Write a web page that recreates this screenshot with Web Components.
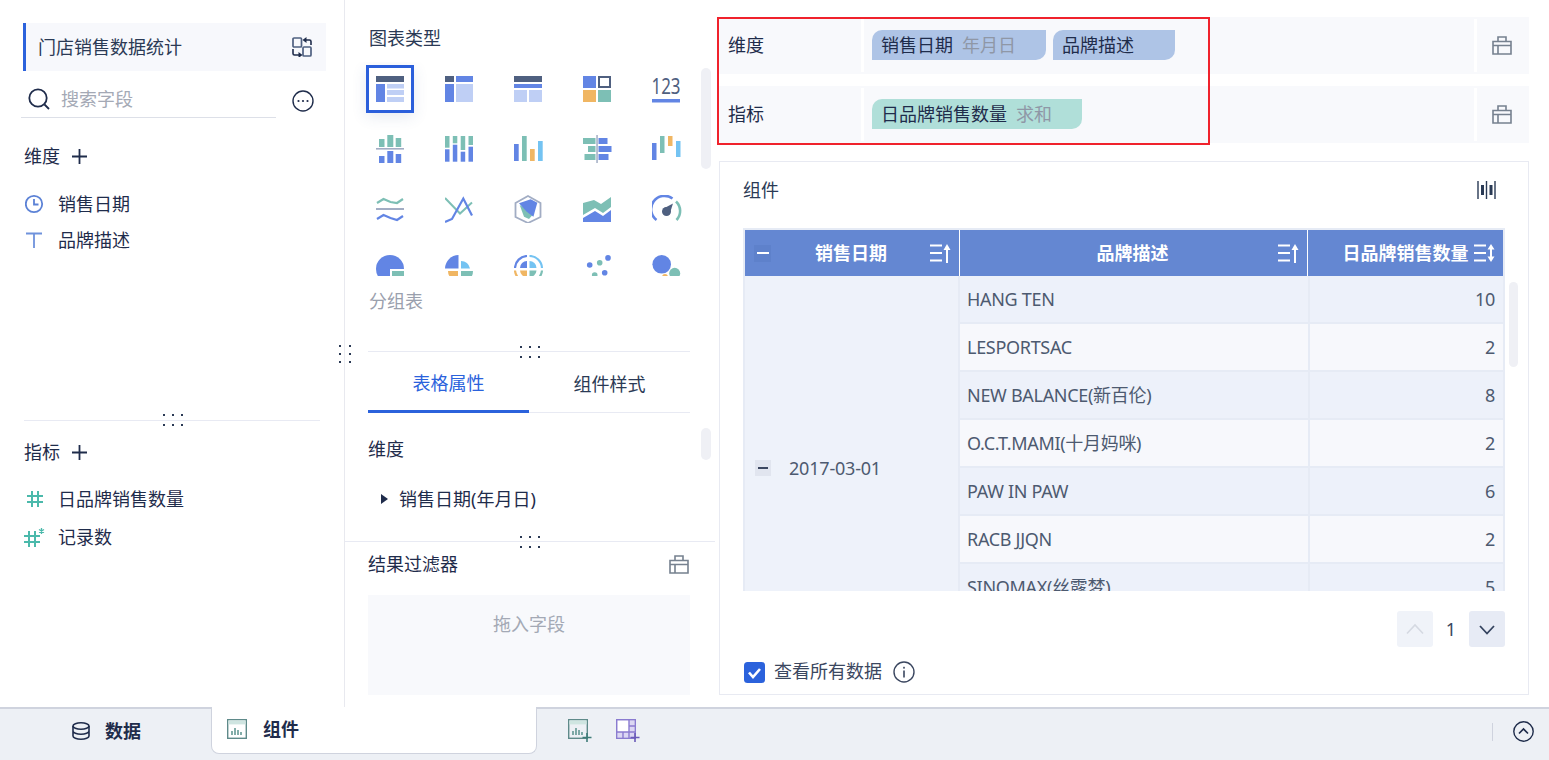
<!DOCTYPE html>
<html lang="zh">
<head>
<meta charset="utf-8">
<title>门店销售数据统计</title>
<style>
html, body { margin: 0; height: 760px; overflow: hidden; background: #fff; }
body {
	display: flex;
	flex-direction: column;
	font: 18px/26px "Noto Sans", "Noto Sans CJK SC", sans-serif;
	color: #1f2c4b;
}
.main { display: flex; height: 707px; }
</style>
</head>
<body>
<div class="main">
	<field-panel></field-panel>
	<chart-panel></chart-panel>
	<widget-panel></widget-panel>
</div>
<bottom-bar></bottom-bar>

<script>
const DARK = '#4f6080', BLUE = '#6285e4', TEAL = '#7dbfb5', ORANGE = '#f0b663', SKY = '#74c3f2', LIGHT = '#bfcff5', NAVY = '#1f2c4b';

function svg (w, h, body, box) {
	return `<svg xmlns="http://www.w3.org/2000/svg" width="${w}" height="${h}" viewBox="${box || `0 0 ${w} ${h}`}" fill="none" style="display:block">${body}</svg>`;
}

function rects (color, list) {
	return list.map(r => `<rect x="${r[0]}" y="${r[1]}" width="${r[2]}" height="${r[3]}" fill="${color}"/>`).join('');
}

const dropIcon = svg(20, 19, `<path d="M1 5.500h18V18H1zM6 5.500V1h8v4.500M1 9.500h18M6 9.500V18" stroke="#76818f" stroke-width="1.600"/>`);

const icons = {
	swap: svg(20, 20, `<rect x="1" y="1" width="8.500" height="9" rx="1" stroke="${DARK}" stroke-width="1.700"/><rect x="11" y="10" width="8" height="9" rx="1" stroke="${DARK}" stroke-width="1.700"/><path d="M13 3h4.500a1.500 1.500 0 0 1 1.500 1.500V8M1 12v4.500A1.500 1.500 0 0 0 2.500 18H8" stroke="${NAVY}" stroke-width="1.600"/><path d="M14.500 0l-4 3 4 3zM6.500 15l4 3-4 3z" fill="${NAVY}"/>`),
	search: svg(22, 22, `<circle cx="10" cy="10" r="8.700" stroke="${NAVY}" stroke-width="1.800"/><path d="M16.500 16.500l4.500 4.500" stroke="${NAVY}" stroke-width="1.800"/>`),
	more: svg(22, 22, `<circle cx="11" cy="11" r="10" stroke="${NAVY}" stroke-width="1.400"/><circle cx="6.500" cy="11" r="1.100" fill="${NAVY}"/><circle cx="11" cy="11" r="1.100" fill="${NAVY}"/><circle cx="15.500" cy="11" r="1.100" fill="${NAVY}"/>`),
	plus: svg(15, 15, `<path d="M7.500 0v15M0 7.500h15" stroke="${NAVY}" stroke-width="1.800"/>`),
	clock: svg(20, 20, `<circle cx="9" cy="10" r="8.200" stroke="#5c82d6" stroke-width="1.800"/><path d="M9 5v5.500h4.500" stroke="#5c82d6" stroke-width="1.800"/>`),
	text: svg(20, 20, `<path d="M1 3.500h16M9 3.500V18" stroke="#6f92dc" stroke-width="1.800"/>`),
	hash: svg(20, 20, `<path d="M7 2v16M13 2v16M2 7h16M2 13h16" stroke="#4bb9ab" stroke-width="2"/>`),
	hashStar: svg(24, 20, `<path d="M6 4v16M12 4v16M1 9h16M1 15h16" stroke="#4bb9ab" stroke-width="2"/><path d="M18.500 1v6M16 2.500l5 3M21 2.500l-5 3" stroke="#4bb9ab" stroke-width="1.300"/>`),
	drop: dropIcon,
	bars: svg(20, 20, `<path d="M1 1v18M9.500 1v18M18 1v18" stroke="#2a3a55" stroke-width="1.400"/><rect x="4" y="5" width="3" height="10" fill="#2a3a55"/><rect x="12.500" y="5" width="3" height="10" fill="#2a3a55"/>`),
	sortUp: svg(21, 20, `<path d="M0 2.500h12M0 10h12M0 17.500h12M17 20V5" stroke="#fff" stroke-width="2"/><path d="M13.500 7L17 1l3.500 6z" fill="#fff"/>`),
	sortBoth: svg(21, 20, `<path d="M0 2.500h12M0 10h12M0 17.500h12M17 15V5" stroke="#fff" stroke-width="2"/><path d="M13.500 6.500L17 1l3.500 5.500zM13.500 13.500L17 19l3.500-5.500z" fill="#fff"/>`),
	up: svg(20, 12, `<path d="M2 10.500L10 2l8 8.500" stroke="#d5d9e2" stroke-width="1.600"/>`),
	down: svg(18, 11, `<path d="M2 2l7 7.500L16 2" stroke="#34435f" stroke-width="1.800"/>`),
	check: svg(21, 21, `<rect width="21" height="21" rx="3.500" fill="#2b62dc"/><path d="M5 10.500l4 4.500 7-8" stroke="#fff" stroke-width="2.600"/>`),
	info: svg(22, 22, `<circle cx="11" cy="11" r="10" stroke="#3b4760" stroke-width="1.400"/><rect x="10.200" y="9.500" width="1.600" height="7" fill="#3b4760"/><rect x="10.200" y="5.800" width="1.600" height="1.800" fill="#3b4760"/>`),
	db: svg(18, 18, `<ellipse cx="9" cy="4" rx="8" ry="3.200" stroke="${NAVY}" stroke-width="1.600"/><path d="M1 4v10c0 1.800 3.600 3.200 8 3.200s8-1.400 8-3.200V4M1 9c0 1.800 3.600 3.200 8 3.200s8-1.400 8-3.200" stroke="${NAVY}" stroke-width="1.600"/>`),
	tabChart: svg(20, 20, `<rect x=".7" y=".7" width="18.600" height="18.600" stroke="#5f8a8a" stroke-width="1.400"/><rect x="1.400" y="1.400" width="17.200" height="4" fill="#cfe5e1"/><path d="M5 16v-4M8 16V9M11 16v-5M14 16v-3" stroke="#4f8a85" stroke-width="1.400"/>`),
	addChart: svg(24, 23, `<rect x=".7" y=".7" width="18.600" height="18.600" stroke="#5f8a8a" stroke-width="1.400"/><rect x="1.400" y="1.400" width="17.200" height="4" fill="#cfe5e1"/><path d="M5 16v-4M8 16V9M11 16v-5M14 16v-3" stroke="#4f8a85" stroke-width="1.400"/><path d="M19 14v9M14.500 18.500h9" stroke="#3f7c78" stroke-width="1.600"/>`),
	addTable: svg(24, 23, `<rect x="1.400" y="1.400" width="17.200" height="17.200" fill="#dcd7f3"/><rect x="1.400" y="1.400" width="11.600" height="11.600" fill="#fff"/><rect x=".7" y=".7" width="18.600" height="18.600" stroke="#8a7bd0" stroke-width="1.400"/><path d="M13 1v12M13 7h6M13 13h6M1 13h12M7 13v6M13 13v6" stroke="#8a7bd0" stroke-width="1.400"/><path d="M19 14v9M14.500 18.500h9" stroke="#6a5bb8" stroke-width="1.600"/>`),
	circleUp: svg(21, 21, `<circle cx="10.500" cy="10.500" r="9.700" stroke="${NAVY}" stroke-width="1.400"/><path d="M6 12.500l4.500-4.500 4.500 4.500" stroke="${NAVY}" stroke-width="1.700"/>`)
};

const chartIcons = [
	rects(DARK, [[0, 1, 28, 6]]) + rects(BLUE, [[0, 9, 9, 18]]) + rects(LIGHT, [[11, 9, 17, 4.500], [11, 15, 17, 5], [11, 22, 17, 5]]),
	rects(DARK, [[0, 1, 9, 6]]) + rects(BLUE, [[11, 1, 17, 6], [0, 9, 9, 18]]) + rects(LIGHT, [[11, 9, 17, 18]]),
	rects(DARK, [[0, 1, 28, 6]]) + rects(BLUE, [[0, 9, 28, 4]]) + rects(LIGHT, [[0, 15, 13, 12], [15, 15, 13, 12]]),
	rects(BLUE, [[0, 1, 13, 12]]) + `<rect x="16" y="2" width="11" height="10" stroke="${DARK}" stroke-width="2"/>` + rects(ORANGE, [[0, 15, 13, 12]]) + rects(TEAL, [[15, 15, 13, 12]]),
	`<text x="14" y="19" text-anchor="middle" font-size="21" textLength="29" lengthAdjust="spacingAndGlyphs" font-family="Noto Sans" fill="${DARK}">123</text>` + rects(BLUE, [[0, 24, 28, 3.500]]),

	rects(TEAL, [[3, 4, 5.500, 8], [11.300, 0, 6, 12], [19.700, 3, 5.500, 9]]) + rects('#a2adc4', [[0, 13, 28, 1.600]]) + rects(BLUE, [[3, 21, 5.500, 7], [11.300, 16, 6, 12], [19.700, 19, 5.500, 9]]),
	rects(TEAL, [[0, 1, 4.500, 11.700], [7.800, 1, 4.500, 7.300], [15.700, 1, 4.500, 14], [23.500, 1, 4.500, 9]]) + rects(BLUE, [[0, 14.300, 4.500, 12.400], [7.800, 9.700, 4.500, 17], [15.700, 16.700, 4.500, 10], [23.500, 11.700, 4.500, 15]]),
	rects(BLUE, [[0, 9, 4.700, 17]]) + rects(TEAL, [[8, 1, 4.700, 25]]) + rects(ORANGE, [[16, 14, 4.700, 12]]) + rects(SKY, [[24, 6, 4.700, 20]]),
	rects(TEAL, [[0, 3, 12.500, 6], [5, 11, 7.500, 6], [1.500, 19, 11, 6]]) + rects('#a2adc4', [[13.300, 0, 1.500, 28]]) + rects(BLUE, [[15.500, 3, 9, 6], [15.500, 11, 13, 6], [15.500, 19, 10, 6]]),
	rects(BLUE, [[0, 8, 4.500, 17]]) + rects(TEAL, [[8, 1, 4.500, 17]]) + rects(ORANGE, [[16, 1, 4.500, 10]]) + rects(SKY, [[24, 6, 4.500, 16]]),

	`<path d="M1 8l6.500-4 7 3 6.500 1 6-4" stroke="${TEAL}" stroke-width="2.200"/><path d="M0 14h28" stroke="#a2adc4" stroke-width="2"/><path d="M1 24l6.500-4 7 3 6.500 2 6-4" stroke="${BLUE}" stroke-width="2.200"/>`,
	`<path d="M0 3l15 15.500L27 7.500" stroke="${TEAL}" stroke-width="2"/><path d="M0 27l7-3L18.300 3.500 27 20.500" stroke="${BLUE}" stroke-width="2.200"/>`,
	`<path d="M14 1l12.500 7v14L14 28 1.500 22V8z" stroke="#a2adc4" stroke-width="1.800"/><path d="M5.700 10l4.300 11.700 5 2.300 5-5.700z" fill="${TEAL}"/><path d="M5 8.300l11.700-4 6.600 3.400-3.900 14-6.700-5z" fill="${BLUE}"/>`,
	`<path d="M0 8l11-3 7 4 10-7v10l-8 6-8-5-12 7z" fill="${TEAL}"/><path d="M0 23l12-7 8 5 8-6v12H0z" fill="${BLUE}"/>`,
	`<path d="M4.500 25A13 13 0 0 1 20.500 3.500" stroke="${BLUE}" stroke-width="2.600"/><path d="M24 6.500A13 13 0 0 1 24.500 25" stroke="${TEAL}" stroke-width="2.600"/><circle cx="14.500" cy="16.500" r="4.500" fill="${DARK}"/><path d="M11.500 13.500L21 8.500l-3.500 11z" fill="${DARK}"/>`,

	`<circle cx="14" cy="14" r="14" fill="${BLUE}"/><rect x="14" y="14" width="15" height="15" fill="#fff"/><rect x="16" y="16" width="12" height="12" fill="${TEAL}"/>`,
	`<path d="M13.500 13.500V0A14 14 0 0 0 0 13.500z" fill="${BLUE}"/><path d="M16 6a9 9 0 0 1 9 7.500h-9z" fill="${SKY}"/><path d="M3 16h10v10A10 10 0 0 1 3 16z" fill="${ORANGE}"/><path d="M16 16h12a12 12 0 0 1-12 12z" fill="${TEAL}"/>`,
	`<path d="M13 6v7H6a7 7 0 0 1 7-7z" fill="${BLUE}"/><path d="M15.500 6v7h7a7 7 0 0 0-7-7z" fill="${SKY}"/><path d="M13 22v-6.500H6A7 7 0 0 0 13 22z" fill="${ORANGE}"/><path d="M15.500 22v-6.500h7a7 7 0 0 1-7 6.500z" fill="${TEAL}"/><path d="M1 13A12.500 12.500 0 0 1 13 1" stroke="${BLUE}" stroke-width="2.200"/><path d="M15.500 1A12.500 12.500 0 0 1 28 13" stroke="${SKY}" stroke-width="2.200"/><path d="M1 15.500A12.500 12.500 0 0 0 13 27" stroke="${ORANGE}" stroke-width="2.200"/><path d="M15.500 27A12.500 12.500 0 0 0 28 15.500" stroke="${TEAL}" stroke-width="2.200"/>`,
	`<circle cx="6.700" cy="10" r="2.800" fill="${BLUE}"/><circle cx="16.700" cy="7.700" r="2.800" fill="${TEAL}"/><circle cx="25" cy="2.900" r="2.800" fill="${BLUE}"/><circle cx="11.700" cy="20" r="2.800" fill="${TEAL}"/><circle cx="21.700" cy="17.700" r="2.800" fill="${BLUE}"/>`,
	`<circle cx="13" cy="22" r="3" fill="${ORANGE}"/><circle cx="9.700" cy="9.300" r="9.300" fill="${BLUE}"/><circle cx="22.700" cy="18.300" r="5.500" fill="${TEAL}"/>`
];

// base class: every element only needs a style and some markup
class Base extends HTMLElement {
	connectedCallback () {
		if (this.shadowRoot) return;
		this.attachShadow({ mode: 'open' });
		this.shadowRoot.innerHTML = `<style>${this.css()}</style>${this.html()}`;
	}
	css () { return ':host { display: block; }'; }
	html () { return '<slot></slot>'; }
}

class AppIcon extends Base {
	css () { return ':host { display: block; line-height: 0; flex: none; }'; }
	html () {
		const name = this.getAttribute('name');
		if (name.startsWith('c') && !icons[name]) return svg(30, 28, chartIcons[+name.slice(1)]);
		return icons[name];
	}
}
customElements.define('app-icon', AppIcon);

class DragDots extends Base {
	css () {
		return `:host { position: absolute; display: grid; grid-template-columns: repeat(var(--cols, 3), 2px);
			column-gap: var(--cgap, 7px); row-gap: var(--rgap, 8px); }
		i { width: 2px; height: 2px; background: #2b3a55; }`;
	}
	html () { return '<i></i>'.repeat(6); }
}
customElements.define('drag-dots', DragDots);

class FieldItem extends Base {
	css () {
		return `:host { display: flex; align-items: center; height: 36px; padding-left: 25px; }
		.ic { width: var(--ic, 33px); }`;
	}
	html () { return `<div class="ic"><app-icon name="${this.getAttribute('icon')}"></app-icon></div><slot></slot>`; }
}
customElements.define('field-item', FieldItem);

class FieldHead extends Base {
	css () { return `:host { display: flex; align-items: center; gap: 12px; height: 26px; padding-left: 24px; }`; }
	html () { return '<slot></slot><app-icon name="plus"></app-icon>'; }
}
customElements.define('field-head', FieldHead);

class FieldPanel extends Base {
	css () {
		return `:host { display: flex; flex-direction: column; position: relative; width: 344px; border-right: 1px solid #e8e9ef; flex: none; }
		.title { display: flex; justify-content: space-between; align-items: center; margin: 23px 18px 0 23px; height: 48px;
			box-sizing: border-box; padding: 0 14px 0 12px; border-left: 3px solid #2b62dc; background: #f7f8fc; color: #2b3a55; }
		.search { display: flex; align-items: center; margin-top: 11px; padding-left: 21px; height: 36px; }
		.box { display: flex; align-items: center; gap: 11px; width: 255px; height: 36px; padding: 0 0 1px 7px; box-sizing: border-box;
			border-bottom: 1.500px solid #dde0e8; color: #a4a9b5; }
		.more { margin: 2px 0 0 16px; }
		.top { height: 303px; box-sizing: border-box; padding-top: 25px; border-bottom: 1px solid #e8eaf3; margin: 0 24px; position: relative; }
		.top field-head, .top .list { margin-left: -24px; }
		.list { margin-top: 16px; }
		.top .list { margin-top: 17px; }
		.bottom { padding-top: 18px; }
		.top drag-dots { left: 139px; bottom: -6px; }`;
	}
	html () {
		return `<div class="title"><span>门店销售数据统计</span><app-icon name="swap"></app-icon></div>
		<div class="search">
			<div class="box"><app-icon name="search"></app-icon><span>搜索字段</span></div>
			<app-icon class="more" name="more"></app-icon>
		</div>
		<div class="top">
			<field-head>维度</field-head>
			<div class="list">
				<field-item icon="clock">销售日期</field-item>
				<field-item icon="text">品牌描述</field-item>
			</div>
			<drag-dots></drag-dots>
		</div>
		<div class="bottom">
			<field-head>指标</field-head>
			<div class="list">
				<field-item icon="hash">日品牌销售数量</field-item>
				<field-item icon="hashStar" style="padding-left:23px; height:40px; --ic:35px">记录数</field-item>
			</div>
		</div>
		<drag-dots style="--cols:2; --cgap:8px; --rgap:6px; left:339px; top:345px"></drag-dots>`;
	}
}
customElements.define('field-panel', FieldPanel);

class ChartPicker extends Base {
	css () {
		return `:host { display: block; position: relative; height: 214px; padding-left: 31px; box-sizing: border-box; }
		.clip { overflow: hidden; height: 214px; margin-left: -31px; padding: 13px 0 0 31px; box-sizing: border-box; }
		.grid { display: grid; grid-template-columns: repeat(5, 28px); column-gap: 41px; grid-auto-rows: 28px; row-gap: 32px; }
		.cell { position: relative; }
		.sel::before { content: ''; position: absolute; inset: -10px; border: 3px solid #2b5fdb; box-shadow: 0 4px 14px rgba(60, 80, 140, .12); }
		.bar { position: absolute; left: 356px; top: 6px; width: 10px; height: 101px; border-radius: 5px; background: #eff0f5; }`;
	}
	html () {
		const cells = chartIcons.map((c, i) => `<div class="cell ${i === 0 ? 'sel' : ''}"><app-icon name="c${i}"></app-icon></div>`).join('');
		return `<div class="clip"><div class="grid">${cells}</div></div><div class="bar"></div>`;
	}
}
customElements.define('chart-picker', ChartPicker);

class ChartPanel extends Base {
	css () {
		return `:host { display: flex; flex-direction: column; position: relative; width: 370px; flex: none; }
		.pick { height: 352px; box-sizing: border-box; margin: 0 25px 0 23px; padding-top: 25px; border-bottom: 1px solid #e8eaf3; position: relative; }
		.pick h4 { margin: 0 0 11px 1px; font: inherit; color: #2b3a55; }
		chart-picker { margin-left: -23px; margin-right: -25px; }
		.name { margin: 12px 0 0 1px; color: #9aa0ad; }
		.tabs { display: flex; margin: 0 25px 0 23px; height: 61px; }
		.tab { flex: 1; display: flex; align-items: center; justify-content: center; padding-top: 3px; box-sizing: border-box; border-bottom: 1.500px solid #e8eaf3; color: #2b3a55; }
		.tab.on { color: #2b62dc; border-bottom: 3px solid #2b62dc; }
		.props { position: relative; height: 129px; box-sizing: border-box; padding: 23px 0 0 23px; border-bottom: 1px solid #e8eaf3; }
		.row { display: flex; align-items: center; margin: 24px 0 0 13px; }
		.tri { width: 0; height: 0; border-left: 7px solid ${NAVY}; border-top: 5px solid transparent; border-bottom: 5px solid transparent; margin-right: 11px; }
		.bar { position: absolute; left: 356px; top: 15px; width: 10px; height: 32px; border-radius: 5px; background: #eff0f5; }
		.filter { flex: 1; padding: 9px 25px 0 23px; }
		.head { display: flex; justify-content: space-between; align-items: center; }
		.head app-icon { margin-right: 1px; }
		.drop { margin-top: 18px; height: 100px; box-sizing: border-box; padding-top: 16px; background: #f8f9fc; text-align: center; color: #a4a9b5; }
		.d1 { left: 175px; top: 346px; }
		.d2 { left: 175px; top: 536px; }`;
	}
	html () {
		return `<div class="pick">
			<h4>图表类型</h4>
			<chart-picker></chart-picker>
			<div class="name">分组表</div>
		</div>
		<div class="tabs"><div class="tab on">表格属性</div><div class="tab">组件样式</div></div>
		<div class="props">
			<div>维度</div>
			<div class="row"><i class="tri"></i>销售日期(年月日)</div>
			<div class="bar"></div>
		</div>
		<div class="filter">
			<div class="head"><span>结果过滤器</span><app-icon name="drop"></app-icon></div>
			<div class="drop">拖入字段</div>
		</div>
		<drag-dots class="d1"></drag-dots>
		<drag-dots class="d2"></drag-dots>`;
	}
}
customElements.define('chart-panel', ChartPanel);

class FieldChip extends Base {
	css () {
		return `:host { display: flex; align-items: center; height: 30px; padding: 0 var(--pr, 30px) 0 9px;
			background: var(--bg, #aec4e6); border-radius: 10px 0 10px 0; white-space: nowrap; }
		span { margin-left: 9px; color: #8f97a6; }`;
	}
	html () {
		const sub = this.getAttribute('sub');
		return `<slot></slot>${sub ? `<span>${sub}</span>` : ''}`;
	}
}
customElements.define('field-chip', FieldChip);

class DropRow extends Base {
	css () {
		return `:host { display: grid; grid-template-columns: 142px 3px 1fr 3px 52px; height: 57px; background: #f8f9fc; }
		.label { display: flex; align-items: center; padding: 0 0 2px 9px; }
		.sep { background: #fff; margin: 2px 0; }
		.chips { display: flex; align-items: flex-start; gap: 7px; padding: 13px 0 0 8px; }
		.end { display: flex; align-items: center; justify-content: center; padding-right: 2px; }`;
	}
	html () {
		return `<div class="label">${this.getAttribute('label')}</div><div class="sep"></div>
		<div class="chips"><slot></slot></div><div class="sep"></div>
		<div class="end"><app-icon name="drop"></app-icon></div>`;
	}
}
customElements.define('drop-row', DropRow);

class DataGrid extends Base {
	css () {
		return `:host { display: block; position: relative; }
		.wrap { height: 363px; box-sizing: border-box; overflow: hidden; border: solid #e6ebf5; border-width: 2px 2px 0 2px; }
		.grid { display: grid; grid-template-columns: 215px 348px 195px; grid-template-rows: 46px; grid-auto-rows: 48px; color: #4d5a70; }
		.th { display: grid; grid-template-columns: 1fr auto 1fr; align-items: center; background: #6487d2; color: #fff; font-weight: 700; padding: 0 8px 0 6px; box-sizing: border-box; border-right: 1px solid #fff; white-space: nowrap; }
		.th:nth-child(3) { border-right: 0; padding-left: 8px; }
		.th app-icon { justify-self: end; }
		.min { width: 17px; height: 17px; margin-left: 3px; background: #5e81cb; display: flex; align-items: center; justify-content: center; }
		.min::after { content: ''; width: 12px; height: 2px; background: #fff; }
		.merged { grid-row: span 8; background: #eef2fa; border-right: 2px solid #e6ebf5; display: flex; align-items: center; padding-left: 10px; box-sizing: border-box; letter-spacing: -.2px; }
		.box { width: 16px; height: 16px; background: #e1e5ef; display: flex; align-items: center; justify-content: center; margin-right: 18px; }
		.box::after { content: ''; width: 10px; height: 2px; background: #3b4760; }
		.td { display: flex; align-items: center; box-sizing: border-box; padding: 0 8px 0 7px; border-bottom: 2px solid #e6ebf5; background: #f7f8fc; letter-spacing: -.3px; }
		.td.odd { background: #edf1fa; }
		.n { justify-content: flex-end; border-left: 2px solid #e6ebf5; }
		.bar { position: absolute; right: -13px; top: 54px; width: 9px; height: 85px; border-radius: 5px; background: #eff0f5; }`;
	}
	html () {
		const rows = [['HANG TEN', 10], ['LESPORTSAC', 2], ['NEW BALANCE(新百伦)', 8], ['O.C.T.MAMI(十月妈咪)', 2], ['PAW IN PAW', 6], ['RACB JJQN', 2], ['SINOMAX(丝露梦)', 5], ['', '']];
		const body = rows.map((r, i) => {
			const cls = i % 2 === 0 ? 'odd' : '';
			return `<div class="td ${cls}">${r[0]}</div><div class="td n ${cls}">${r[1]}</div>`;
		}).join('');
		const th = (text, left, icon) => `<div class="th"><span>${left ? '<div class="min"></div>' : ''}</span><span>${text}</span><app-icon name="${icon}"></app-icon></div>`;
		return `<div class="wrap"><div class="grid">
			${th('销售日期', true, 'sortUp')}${th('品牌描述', false, 'sortUp')}${th('日品牌销售数量', false, 'sortBoth')}
			<div class="merged"><div class="box"></div>2017-03-01</div>
			${body}
		</div></div><div class="bar"></div>`;
	}
}
customElements.define('data-grid', DataGrid);

class WidgetCard extends Base {
	css () {
		return `:host { display: block; height: 534px; box-sizing: border-box; border: 1px solid #e8eaf2; padding: 0 23px; margin-top: 18px; }
		.head { display: flex; justify-content: space-between; align-items: center; height: 56px; padding-right: 8px; box-sizing: border-box; color: #2b3a55; }
		data-grid { margin-top: 10px; }
		.pager { display: flex; justify-content: flex-end; align-items: center; margin-top: 20px; color: #3b4760; }
		.btn { width: 36px; height: 36px; border-radius: 3px; display: flex; align-items: center; justify-content: center; background: #f0f3f9; }
		.btn.on { background: #e7ebf5; }
		.pager span { width: 36px; text-align: center; }
		.all { display: flex; align-items: center; margin-top: 13px; padding-left: 1px; color: #3b4760; }
		.all span { margin: -2px 11px 0 9px; }`;
	}
	html () {
		return `<div class="head"><span>组件</span><app-icon name="bars"></app-icon></div>
		<data-grid></data-grid>
		<div class="pager">
			<div class="btn"><app-icon name="up"></app-icon></div>
			<span>1</span>
			<div class="btn on"><app-icon name="down"></app-icon></div>
		</div>
		<div class="all"><app-icon name="check"></app-icon><span>查看所有数据</span><app-icon name="info"></app-icon></div>`;
	}
}
customElements.define('widget-card', WidgetCard);

class WidgetPanel extends Base {
	css () {
		return `:host { display: flex; flex-direction: column; position: relative; width: 810px; margin-left: 4px; padding-top: 17px; box-sizing: border-box; }
		drop-row + drop-row { margin-top: 12px; }
		.mark { position: absolute; left: -2px; top: 17px; width: 493px; height: 128px; box-sizing: border-box; border: 2px solid #f0222c; pointer-events: none; }`;
	}
	html () {
		return `<drop-row label="维度">
			<field-chip sub="年月日">销售日期</field-chip>
			<field-chip style="--pr:41px">品牌描述</field-chip>
		</drop-row>
		<drop-row label="指标">
			<field-chip sub="求和" style="--bg:#b0dfd9">日品牌销售数量</field-chip>
		</drop-row>
		<widget-card></widget-card>
		<div class="mark"></div>`;
	}
}
customElements.define('widget-panel', WidgetPanel);

class BottomBar extends Base {
	css () {
		return `:host { display: flex; align-items: flex-start; height: 53px; box-sizing: border-box; background: #edf0f5; border-top: 2px solid #cfd3de; position: relative; }
		b { font-weight: 700; color: ${NAVY}; }
		.data { display: flex; align-items: center; gap: 15px; width: 211px; padding: 9px 0 0 72px; box-sizing: border-box; }
		.tab { display: flex; align-items: center; gap: 16px; width: 326px; height: 47px; margin-top: -2px; padding: 0 0 2px 15px; box-sizing: border-box;
			background: #fff; border: 1px solid #cfd3de; border-top: 0; border-radius: 0 0 8px 8px; }
		.add { display: flex; gap: 24px; margin: 10px 0 0 31px; }
		.end { display: flex; align-items: center; margin: 12px 15px 0 auto; }
		.line { width: 1px; height: 18px; background: #cfd3de; margin-right: 20px; }`;
	}
	html () {
		return `<div class="data"><app-icon name="db"></app-icon><b>数据</b></div>
		<div class="tab"><app-icon name="tabChart"></app-icon><b>组件</b></div>
		<div class="add"><app-icon name="addChart"></app-icon><app-icon name="addTable"></app-icon></div>
		<div class="end"><i class="line"></i><app-icon name="circleUp"></app-icon></div>`;
	}
}
customElements.define('bottom-bar', BottomBar);
</script>
</body>
</html>
